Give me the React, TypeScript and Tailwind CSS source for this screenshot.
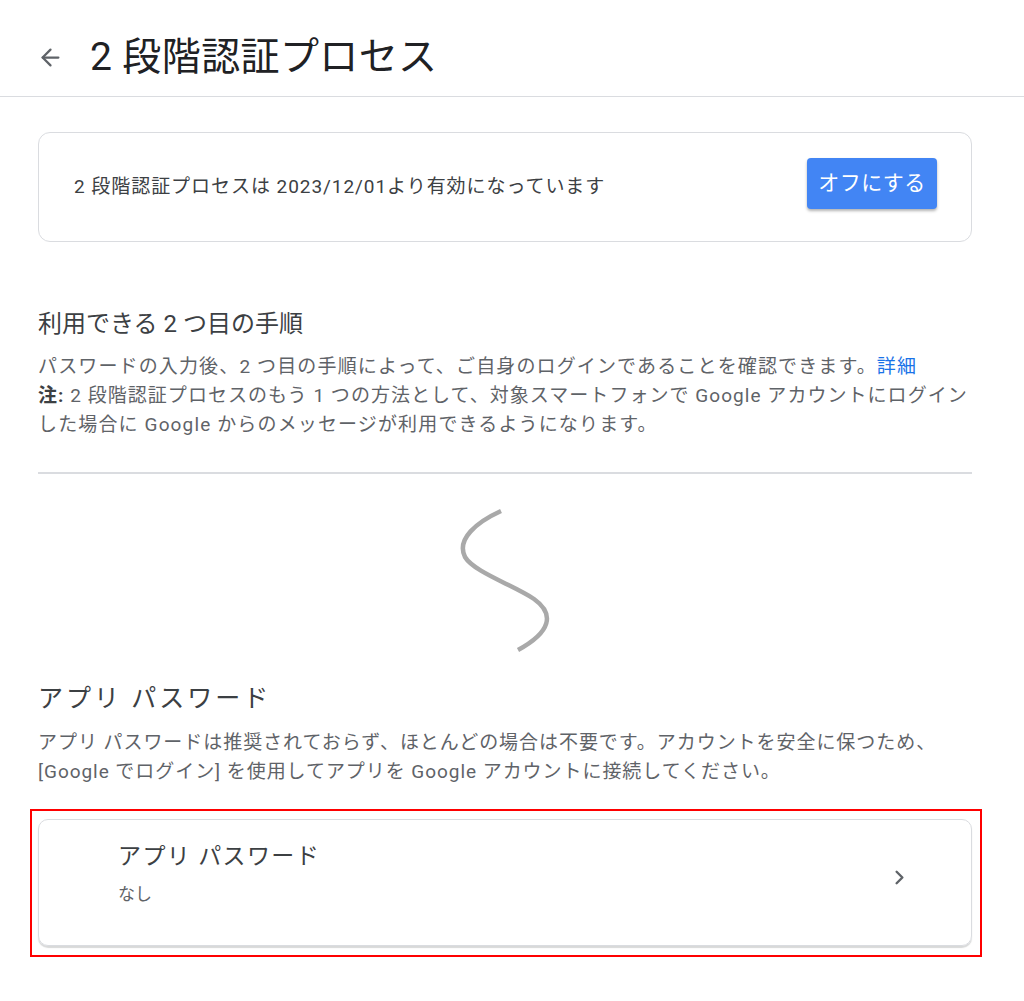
import React from 'react';
import { ArrowLeft, ChevronRight } from 'lucide-react';

const font = { fontFamily: "Roboto, 'Noto Sans CJK JP', sans-serif" };

const Squiggle = () => (
  <svg width="100" height="150" viewBox="0 0 100 150" fill="none">
    <path
      d="M46 5 C 22 16, 1 33, 10 51 C 19 66, 58 79, 79 93 C 100 108, 96 126, 63 144"
      stroke="#a9a9a9"
      strokeWidth="4.5"
      strokeLinecap="butt"
    />
  </svg>
);

export default function App() {
  return (
    <div className="min-h-[1001px] w-[1024px] bg-white text-[#202124]" style={font}>
      {/* Header */}
      <header className="flex h-[97px] items-center gap-[26px] border-b border-[#dadce0] pl-[37px] pt-[18px]">
        <ArrowLeft size={27} strokeWidth={2} className="text-[#5f6368]" />
        <h1 className="text-[39px] leading-none tracking-[0.01em] text-[#202124]">2 段階認証プロセス</h1>
      </header>

      <main className="ml-[38px] w-[934px]">
        {/* Status card */}
        <div className="mt-[35px] flex h-[110px] items-center justify-between rounded-[12px] border border-[#dadce0] pl-[35px] pr-[34px]">
          <p className="text-[19px] tracking-[0.05em] text-[#3c4043]">
            2 段階認証プロセスは 2023/12/01より有効になっています
          </p>
          <button className="mb-[7px] h-[51px] w-[130px] rounded-[4px] bg-[#4285f4] text-[21px] tracking-[0.02em] text-white shadow-[0_2px_3px_rgba(0,0,0,0.3)]">
            オフにする
          </button>
        </div>

        {/* Second step */}
        <h2 className="mt-[66px] text-[24px] leading-[32px] text-[#3c4043]">利用できる 2 つ目の手順</h2>
        <div className="mt-[12px] text-[19px] leading-[29px] tracking-[0.06em] text-[#5f6368]">
          <p>
            パスワードの入力後、2 つ目の手順によって、ご自身のログインであることを確認できます。
            <span className="text-[#1a73e8]">詳細</span>
          </p>
          <p>
            <span className="whitespace-nowrap tracking-[0.055em]">
              <span className="font-bold text-[#3c4043]">注:</span> 2 段階認証プロセスのもう 1 つの方法として、対象スマートフォンで Google アカウントにログイン
            </span>
            <br />
            した場合に Google からのメッセージが利用できるようになります。
          </p>
        </div>

        <div className="mt-[33px] h-[2px] bg-[#dadce0]" />

        <div className="mt-[32px] flex justify-center">
          <Squiggle />
        </div>

        {/* App passwords */}
        <h2 className="mt-[27px] text-[25px] leading-[32px] tracking-[0.12em] text-[#3c4043]">アプリ パスワード</h2>
        <p className="mt-[13px] text-[19px] leading-[29px] tracking-[0.05em] text-[#5f6368]">
          アプリ パスワードは推奨されておらず、ほとんどの場合は不要です。アカウントを安全に保つため、[Google でログイン] を使用してアプリを Google アカウントに接続してください。
        </p>

        <div className="-ml-[8px] mt-[23px] w-[952px] border-2 border-[#ff0000] pb-[9px] pl-[6px] pr-[8px] pt-[8px]">
          <div className="flex h-[127px] items-start justify-between rounded-[10px] border border-[#dadce0] pl-[79px] pr-[60px] pt-[21px] shadow-[0_2px_1px_rgba(60,64,67,0.2)]">
            <div>
              <div className="text-[23px] leading-[32px] tracking-[0.06em] text-[#3c4043]">アプリ パスワード</div>
              <div className="mt-[9px] text-[17px] leading-[24px] text-[#5f6368]">なし</div>
            </div>
            <ChevronRight size={23} strokeWidth={2.5} className="mt-[25px] text-[#5f6368]" />
          </div>
        </div>
      </main>
    </div>
  );
}
